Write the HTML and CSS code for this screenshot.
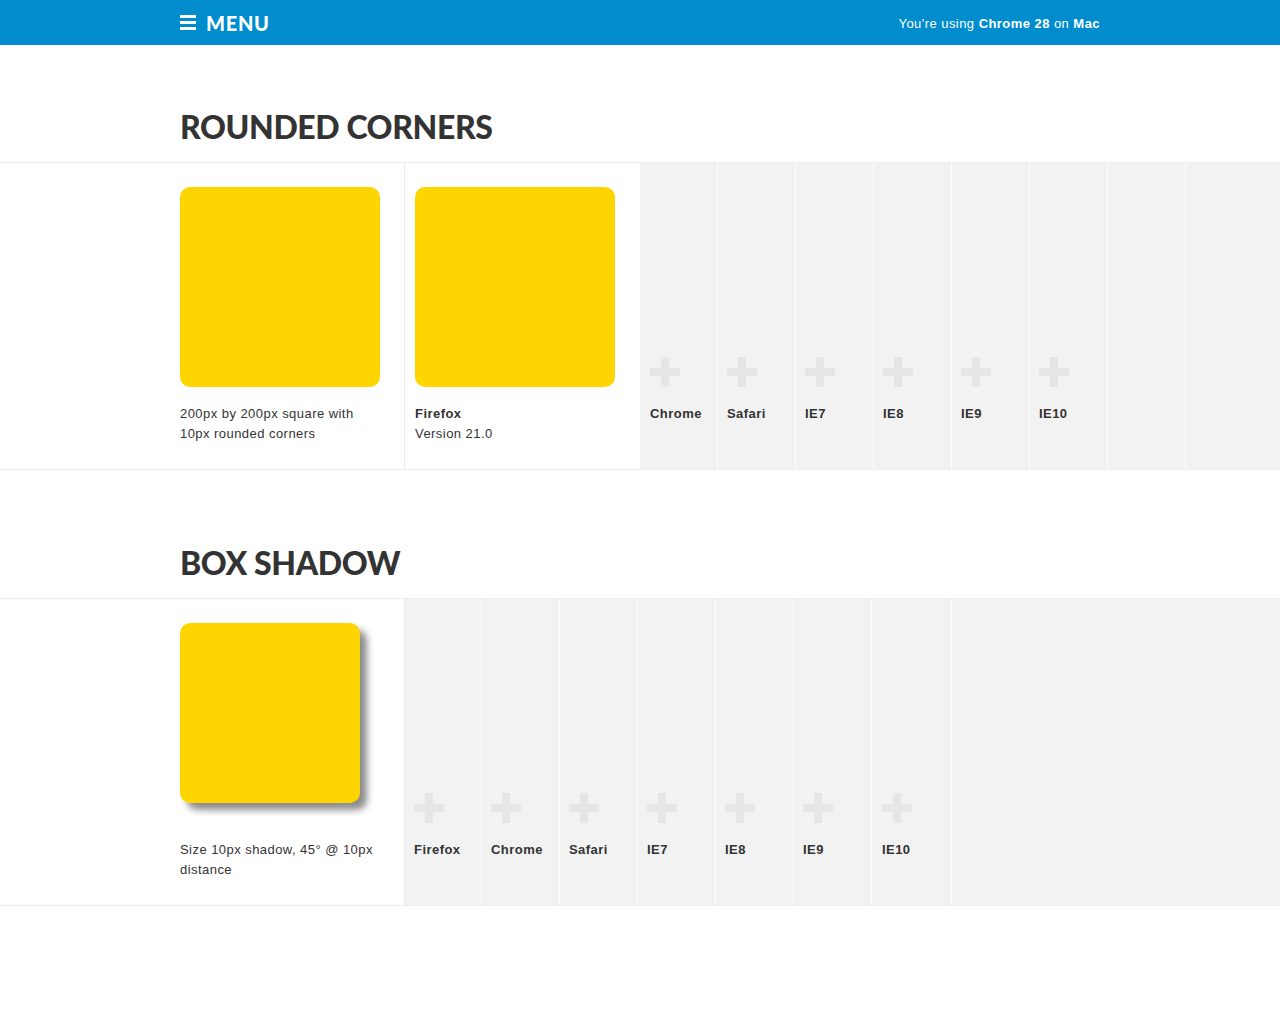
FILE: index.html
```html
<!DOCTYPE html>
<html lang="en">
<head>
<meta charset="utf-8">
<title>CSS3 Features</title>
<link rel="stylesheet" href="styles.css">
</head>
<body>
<header class="topbar">
  <div class="wrap topbar-inner">
    <a class="menu" href="#">
      <span class="burger"><i></i><i></i><i></i></span>
      <span class="menu-label">MENU</span>
    </a>
    <p class="using">You're using <b>Chrome 28</b> on <b>Mac</b></p>
  </div>
</header>

<section class="feature first">
  <div class="wrap"><h2 class="feature-title">ROUNDED CORNERS</h2></div>
  <div class="row">
    <div class="gutter"></div>
    <div class="demo">
      <div class="swatch rounded"></div>
      <p class="desc">200px by 200px square with<br>10px rounded corners</p>
    </div>
    <div class="result">
      <div class="swatch rounded"></div>
      <p class="desc"><b>Firefox</b><br>Version 21.0</p>
    </div>
    <div class="browser"><span class="plus"></span><span class="name">Chrome</span></div>
    <div class="browser"><span class="plus"></span><span class="name">Safari</span></div>
    <div class="browser"><span class="plus"></span><span class="name">IE7</span></div>
    <div class="browser"><span class="plus"></span><span class="name">IE8</span></div>
    <div class="browser"><span class="plus"></span><span class="name">IE9</span></div>
    <div class="browser"><span class="plus"></span><span class="name">IE10</span></div>
    <div class="browser empty"></div>
    <div class="filler"></div>
  </div>
</section>

<section class="feature second">
  <div class="wrap"><h2 class="feature-title">BOX SHADOW</h2></div>
  <div class="row">
    <div class="gutter"></div>
    <div class="demo">
      <div class="swatch shadowed"></div>
      <p class="desc">Size 10px shadow, 45° @ 10px<br>distance</p>
    </div>
    <div class="browser"><span class="plus"></span><span class="name">Firefox</span></div>
    <div class="browser"><span class="plus"></span><span class="name">Chrome</span></div>
    <div class="browser"><span class="plus"></span><span class="name">Safari</span></div>
    <div class="browser"><span class="plus"></span><span class="name">IE7</span></div>
    <div class="browser"><span class="plus"></span><span class="name">IE8</span></div>
    <div class="browser"><span class="plus"></span><span class="name">IE9</span></div>
    <div class="browser wide"><span class="plus"></span><span class="name">IE10</span></div>
    <div class="filler"></div>
  </div>
</section>
</body>
</html>
```

FILE: styles.css
```css
* { box-sizing: border-box; }

html, body {
  margin: 0;
  padding: 0;
  background: #fff;
  color: #333;
  font-family: "Liberation Sans", Arial, sans-serif;
  font-size: 13px;
  letter-spacing: 0.45px;
}

.wrap {
  width: 920px;
  margin: 0 0 0 180px;
}

/* top bar */
.topbar {
  background: #008ccd;
  height: 45px;
  color: #fff;
}
.topbar-inner {
  height: 45px;
  display: flex;
  align-items: center;
  justify-content: space-between;
}
.menu {
  display: flex;
  align-items: center;
  color: #fff;
  text-decoration: none;
}
.burger {
  display: flex;
  flex-direction: column;
  gap: 3px;
  width: 16px;
  margin-right: 10px;
}
.burger i {
  display: block;
  height: 3px;
  background: #fff;
}
.menu-label {
  font-family: Lato, "Open Sans", sans-serif;
  font-weight: 900;
  font-size: 20px;
  letter-spacing: 0.7px;
  line-height: 1;
}
.using {
  margin: 0;
  font-size: 13px;
  line-height: 1;
  padding-top: 1px;
}

/* feature sections */
.feature-title {
  margin: 0;
  font-family: Lato, "Open Sans", sans-serif;
  font-weight: 900;
  font-size: 32px;
  line-height: 40px;
  letter-spacing: -0.4px;
  color: #333;
}
.first .wrap { padding-top: 62px; padding-bottom: 15px; }
.second .wrap { padding-top: 73px; padding-bottom: 15px; }

.row {
  display: flex;
  border-top: 1px solid #ececec;
  border-bottom: 1px solid #ececec;
}
.gutter { width: 180px; flex: none; }

.demo {
  width: 225px;
  flex: none;
  padding: 24px 0 25px 0;
  border-right: 1px solid #ececec;
}
.result {
  width: 235px;
  flex: none;
  padding: 24px 0 25px 10px;
}

.swatch {
  background: #ffd500;
  border-radius: 10px;
}
.swatch.rounded { width: 200px; height: 200px; }
.swatch.shadowed {
  width: 180px;
  height: 180px;
  box-shadow: 7px 7px 7px rgba(0, 0, 0, 0.45);
}

.desc {
  margin: 17px 0 0;
  line-height: 20px;
  font-size: 13px;
  color: #333;
}
.second .desc { margin-top: 37px; }

.browser {
  width: 78px;
  flex: none;
  background: #f2f2f2;
  border-left: 1px solid #fff;
  padding: 0 0 45px 9px;
  display: flex;
  flex-direction: column;
  justify-content: flex-end;
}
.browser.wide { width: 80px; padding-left: 10px; }
.demo + .browser { border-left: none; width: 76px; padding-left: 9px; }
.result + .browser { border-left: none; width: 77px; padding-left: 10px; }
.filler {
  flex: 1;
  background: #f2f2f2;
  border-left: 1px solid #fff;
}

.plus {
  position: relative;
  display: block;
  width: 30px;
  height: 30px;
  margin-bottom: 17px;
}
.plus::before,
.plus::after {
  content: "";
  position: absolute;
  background: #e6e6e6;
}
.plus::before { left: 11px; top: 0; width: 8px; height: 30px; }
.plus::after { left: 0; top: 11px; width: 30px; height: 8px; }

.name {
  display: block;
  font-weight: bold;
  font-size: 13px;
  line-height: 20px;
  color: #333;
}
```
